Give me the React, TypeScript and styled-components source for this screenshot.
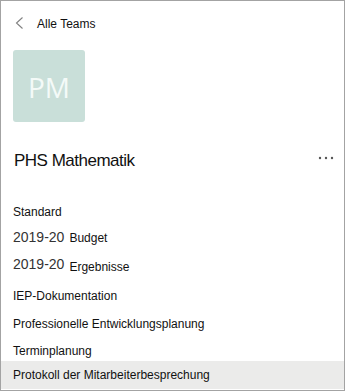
import React from "react";
import styled, { createGlobalStyle } from "styled-components";

const Global = createGlobalStyle`
  html, body { margin: 0; padding: 0; background: #fff; }
  body { font-family: "Liberation Sans", Arial, sans-serif; }
`;

const Frame = styled.div`
  box-sizing: border-box;
  width: 345px;
  height: 391px;
  border: 1px solid #a3a3a3;
  display: flex;
  flex-direction: column;
  overflow: hidden;
  color: #1b1b1b;
`;

const Header = styled.div`
  box-sizing: border-box;
  display: flex;
  align-items: flex-start;
  height: 49px;
  padding: 16px 0 0 14px;
  gap: 13px;
`;

const HeaderLabel = styled.span`
  font-size: 12px;
  line-height: 14px;
  color: #111;
`;

const Avatar = styled.div`
  margin-left: 12px;
  width: 72px;
  height: 72px;
  border-radius: 3px;
  background: #c9dfd9;
  display: flex;
  align-items: center;
  justify-content: center;
  color: #f4faf8;
  font-family: "Open Sans", "Noto Sans", sans-serif;
  font-size: 28px;
  line-height: 1;
  padding-top: 1px;
  box-sizing: border-box;
`;

const TitleRow = styled.div`
  display: flex;
  align-items: flex-start;
  justify-content: space-between;
  margin-top: 27px;
  padding: 0 10px 0 13px;
  height: 24px;
`;

const Title = styled.span`
  font-size: 17px;
  line-height: 24px;
  letter-spacing: -0.5px;
  color: #111;
`;

const MoreIcon = styled.svg`
  margin-top: 7px;
`;

const List = styled.div`
  display: flex;
  flex-direction: column;
  margin-top: 25px;
`;

const Row = styled.div<{ $active?: boolean; $h?: number }>`
  flex: none;
  height: ${(p) => p.$h ?? 28}px;
  padding-left: 12px;
  font-size: 12px;
  line-height: 28px;
  white-space: nowrap;
  color: #111;
  background: ${(p) => (p.$active ? "#ebebea" : "transparent")};
`;

const Year = styled.span<{ $raise?: number }>`
  font-size: 14px;
  line-height: 1;
  color: #333;
  margin-right: 5px;
  vertical-align: ${(p) => p.$raise ?? 0}px;
`;

const Chevron = () => (
  <svg width="9" height="13" viewBox="0 0 9 13">
    <path d="M7.5 0.5 L1.5 6 L7.5 11.5" fill="none" stroke="#808080" strokeWidth="1.1" />
  </svg>
);

const More = () => (
  <MoreIcon width="16" height="4" viewBox="0 0 16 4">
    <circle cx="2" cy="2" r="1.2" fill="#555" />
    <circle cx="8" cy="2" r="1.2" fill="#555" />
    <circle cx="14" cy="2" r="1.2" fill="#555" />
  </MoreIcon>
);

export default function App() {
  return (
    <>
      <Global />
      <Frame>
        <Header>
          <Chevron />
          <HeaderLabel>Alle Teams</HeaderLabel>
        </Header>
        <Avatar>PM</Avatar>
        <TitleRow>
          <Title>PHS Mathematik</Title>
          <More />
        </TitleRow>
        <List>
          <Row $h={26}>Standard</Row>
          <Row $h={29}><Year>2019-20</Year>Budget</Row>
          <Row $h={29}><Year $raise={2}>2019-20</Year>Ergebnisse</Row>
          <Row $h={28}>IEP-Dokumentation</Row>
          <Row $h={27}>Professionelle Entwicklungsplanung</Row>
          <Row $h={24}>Terminplanung</Row>
          <Row $active>Protokoll der Mitarbeiterbesprechung</Row>
        </List>
      </Frame>
    </>
  );
}
